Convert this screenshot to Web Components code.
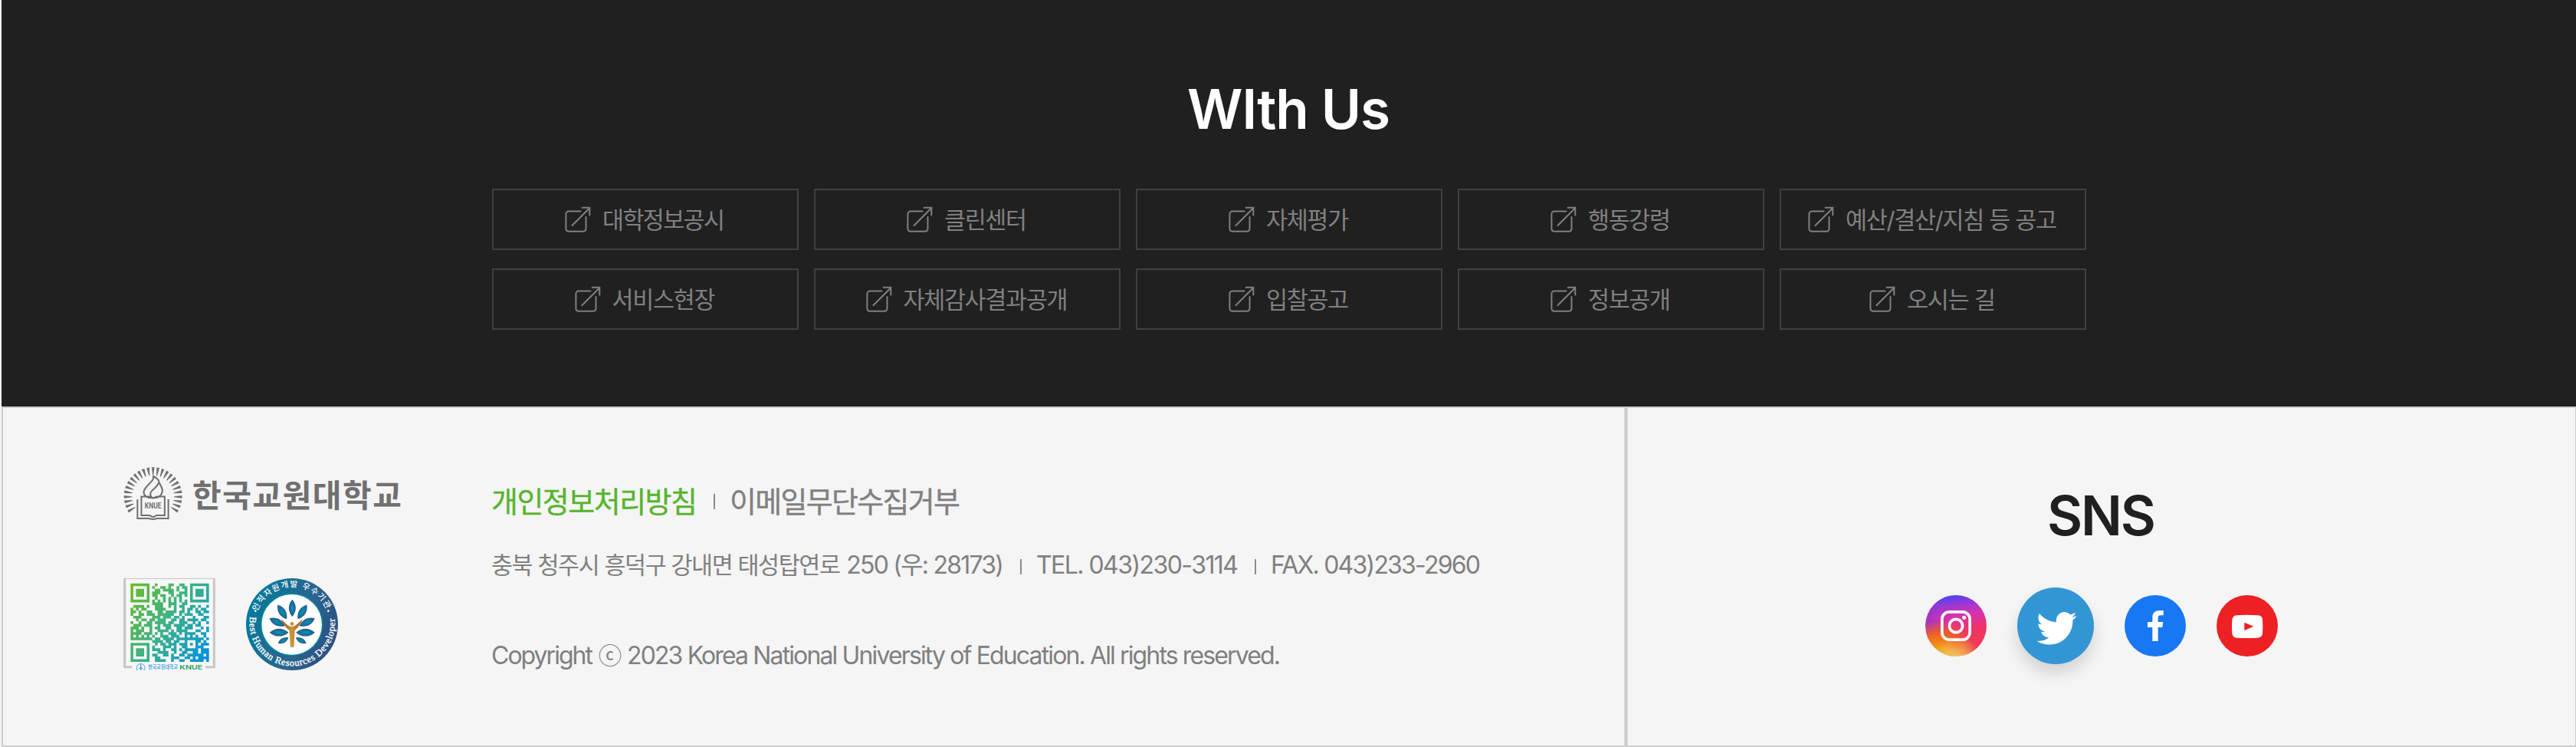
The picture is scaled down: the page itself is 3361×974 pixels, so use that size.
<!DOCTYPE html>
<html lang="ko">
<head>
<meta charset="utf-8">
<title>한국교원대학교</title>
<style>
html,body{margin:0;padding:0}
body{background:#f5f5f5;font-family:Inter,"Noto Sans CJK KR",sans-serif;overflow:hidden;height:974px}
</style>
</head>
<body>
<site-bottom></site-bottom>
<script>
const define = (name, html, init) => {
  const tpl = document.createElement('template');
  tpl.innerHTML = html;
  customElements.define(name, class extends HTMLElement {
    constructor(){ super(); this.attachShadow({mode:'open'}); }
    connectedCallback(){
      if (this.shadowRoot.firstChild) return;
      this.shadowRoot.append(tpl.content.cloneNode(true));
      if (init) init(this, this.shadowRoot);
    }
  });
};

/* Text tracked out or in so that its line takes exactly the width in "w". */
define('fit-text', `<style>:host{display:inline-block;white-space:pre;flex:none}span{display:inline-block}</style><span><slot></slot></span>`,
  (el, root) => {
    const w = +el.getAttribute('w');
    el.style.width = w + 'px';
    const n = [...el.textContent].length - 1;
    const now = root.querySelector('span').getBoundingClientRect().width;
    if (n > 0) el.style.letterSpacing = ((w - now) / n) + 'px';
  });

define('link-button', `<style>
:host{display:flex;align-items:center;justify-content:center;gap:15px;box-sizing:border-box;width:400px;height:80px;border:2px solid #404040;color:#808080;font-size:30.5px;line-height:40px}
svg{width:34px;height:34px;flex:none;display:block}
::slotted(fit-text){margin-top:2px}
</style>
<svg viewBox="0 0 34 34" fill="none" stroke="#808080" stroke-width="2" stroke-linecap="round"><path d="M20.5 6.6H4.8A3.4 3.4 0 0 0 1.4 10v19.300a3.400 3.400 0 0 0 3.400 3.400H24.100a3.400 3.400 0 0 0 3.400-3.400V14"/><path d="M9.500 25 32 2.500M22.700 1.700h9.600v9.800"/></svg><slot></slot>`);

define('with-us', `<style>
:host{display:flex;flex-direction:column;align-items:center;height:530px;background:#202020}
h2{margin:102px 0 64px;height:80px;line-height:80px;font-size:71px;font-weight:600;color:#fff}
nav{display:grid;grid-template-columns:repeat(5,400px);gap:24px 20px}
</style>
<h2><fit-text w="265">WIth Us</fit-text></h2>
<nav>
<link-button><fit-text w="160">대학정보공시</fit-text></link-button>
<link-button><fit-text w="108">클린센터</fit-text></link-button>
<link-button><fit-text w="108">자체평가</fit-text></link-button>
<link-button><fit-text w="108">행동강령</fit-text></link-button>
<link-button><fit-text w="276">예산/결산/지침 등 공고</fit-text></link-button>
<link-button><fit-text w="135">서비스현장</fit-text></link-button>
<link-button><fit-text w="215">자체감사결과공개</fit-text></link-button>
<link-button><fit-text w="108">입찰공고</fit-text></link-button>
<link-button><fit-text w="108">정보공개</fit-text></link-button>
<link-button><fit-text w="116">오시는 길</fit-text></link-button>
</nav>`);

define('knue-logo', `<style>
:host{display:flex;align-items:flex-start;gap:12px;height:70px;color:#707070}
svg{width:78px;height:69px;display:block}
fit-text{font:700 41px/48px "Noto Sans CJK KR",sans-serif;margin-top:10px}
</style>
<svg viewBox="0 0 228 204">
<g class="rays" fill="#707070"></g>
<g fill="none" stroke="#707070" stroke-width="6" stroke-linejoin="round">
<path d="M113 34c5 14-5 20-15 31-13 14-22 22-21 33 1 10 9 17 20 20h31c13-5 21-14 21-28 0-12-8-21-13-31-7 20-26 26-32 39-3 8 0 15 6 20M113 34c14 8 26 17 23 27"/>
<path d="M68 114v72h32c4 0 5 6 13 6s9-6 13-6h32v-72h-31c-5 0-6 6-14 6s-9-6-14-6zM53 124v74h44c3 0 5 3 16 3s13-3 16-3h43v-74" stroke-linejoin="miter"/>
</g>
<text x="113" y="160" text-anchor="middle" font-family="Roboto,sans-serif" font-weight="700" font-size="30" textLength="64" lengthAdjust="spacingAndGlyphs" fill="#707070">KNUE</text>
</svg><fit-text w="273">한국교원대학교</fit-text>`,
  (el, root) => {
    let s = '';
    for (let i = -12; i <= 12; i++) s += `<path transform="translate(113 113) rotate(${i * 10.1})" d="M-5.500 -112h11L1.500 -81h-3z"/>`;
    root.querySelector('.rays').innerHTML = s;
  });

define('qr-mark', `<style>:host{display:block;width:120px;height:120px}svg{display:block;width:120px;height:120px}</style>
<svg viewBox="0 0 360 360">
<defs><linearGradient id="g" gradientUnits="userSpaceOnUse" x1="10" y1="70" x2="340" y2="300"><stop offset="0" stop-color="#66bb30"/><stop offset=".45" stop-color="#3eb382"/><stop offset=".72" stop-color="#22a4b0"/><stop offset="1" stop-color="#0090e4"/></linearGradient></defs>
<path d="M2 0h356v350H2z" fill="#f7f7f7"/>
<path d="M5 0v347h28M355 0v347h-34" fill="none" stroke="#c6c6c6" stroke-width="9"/><path d="M0 1h360" stroke="#c6c6c6" stroke-width="4"/>
<path class="m" fill="url(#g)"/>
<circle cx="68" cy="350" r="16" fill="none" stroke="#77b8e8" stroke-width="4"/><path d="M68 336v24M60 352h16" stroke="#4c9edb" stroke-width="4"/>
<text x="97" y="355" font-family="Noto Sans CJK KR,sans-serif" font-weight="700" font-size="20" fill="#5aa9de" textLength="116" lengthAdjust="spacingAndGlyphs">한국교원대학교</text>
<text x="220" y="357" font-family="Inter,sans-serif" font-weight="700" font-size="22" fill="#35a768" textLength="90" lengthAdjust="spacingAndGlyphs">KNUE</text>
</svg>`,
  (el, root) => {
    const rows = [
      '1111111..1....11..11..1111111',
      '1.....1.1..11.1..1.11.1.....1',
      '1.111.1..11.1111.1..1.1.111.1',
      '1.111.1.111...11..111.1.111.1',
      '1.111.1.11.11..1.11.1.1.111.1',
      '1.....1..1..1.1.1.1...1.....1',
      '1111111.1.1.1.1.1.1.1.1111111',
      '........1111..111..11........',
      '.1111.1..111..1.1.11..11.1..1',
      '1.1.11...1111...1..1.11.1.11.',
      '11.1..11..11.1111.11.1..11.11',
      '1..11.111.111111..1.111..11..',
      '.111....111.111.11.1...1...11',
      '..1.11.11.111..11.11.1111.11.',
      '1..1..11.1111.11..111..1.1..1',
      '.111.111..1.111.1111.11.11...',
      '111.1..1.11..11..11.111...1.1',
      '1.111..1..1111.1.1111...11..1',
      '1111.111.1.1..111.1.1111..11.',
      '1.1.1.1.1..111.111..1.1.1..1.',
      '11111111.11.1111.1111111111.1',
      '........1111.11.11..1...11.1.',
      '1111111..1.11.111.111.1.1.111',
      '1.....1.1...111.1..11...111..',
      '1.111.1.111.1..11.1.11111.111',
      '1.111.1...1111..1..11..11.111',
      '1.111.1.11..11.1..11.111111.1',
      '1.....1..11....111..11.1.1111',
      '1111111..1111..1..11..11111.1'];
    let d = '';
    rows.forEach((r, y) => [...r].forEach((c, x) => { if (c === '1') d += `M${(28 + x * 10.58).toFixed(1)} ${(20 + y * 10.58).toFixed(1)}h10.800v10.800h-10.800z`; }));
    root.querySelector('.m').setAttribute('d', d);
  });

define('hrd-badge', `<style>:host{display:block;width:120px;height:120px}svg{display:block;width:120px;height:120px}</style>
<svg viewBox="0 0 360 360">
<defs>
<linearGradient id="r" x1="0" y1=".3" x2="1" y2=".7"><stop offset="0" stop-color="#007c9c"/><stop offset=".6" stop-color="#2c648f"/><stop offset="1" stop-color="#2b4f82"/></linearGradient>
<radialGradient id="l"><stop offset="0" stop-color="#009ab0"/><stop offset=".5" stop-color="#18779f"/><stop offset="1" stop-color="#2a5288"/></radialGradient>
<linearGradient id="b" x1="0" x2="1"><stop offset="0" stop-color="#8a5a22"/><stop offset=".5" stop-color="#cf9438"/><stop offset="1" stop-color="#8a5a22"/></linearGradient>
<path id="top" d="M42 138A145 145 0 0 1 322 146"/>
<path id="bot" d="M18 140A167 167 0 1 0 344 140"/>
<path id="leaf" d="M0-34C18-14 18 12 0 33C-18 12-18-14 0-34z"/>
</defs>
<circle cx="180" cy="180" r="180" fill="url(#r)"/>
<circle cx="179" cy="181" r="120" fill="#fff" stroke="#008aa4" stroke-width="4"/>
<g fill="#fff" font-family="Noto Sans CJK KR,sans-serif">
<text font-size="32" font-weight="500"><textPath href="#top" startOffset="8" textLength="345">인적자원개발 우수기관</textPath></text>
<text font-size="37" font-family="Liberation Serif,serif" stroke="#fff" stroke-width="1"><textPath href="#bot" startOffset="10" textLength="570" lengthAdjust="spacing">Best Human Resources Developer</textPath></text>
<circle cx="37" cy="128" r="4"/><circle cx="322" cy="128" r="4"/>
</g>
<g fill="url(#l)">
<use href="#leaf" transform="translate(181 117)"/>
<use href="#leaf" transform="translate(142 132) rotate(-32)"/><use href="#leaf" transform="translate(220 132) rotate(32)"/>
<use href="#leaf" transform="translate(122 172) rotate(-64)"/><use href="#leaf" transform="translate(239 172) rotate(64)"/>
<use href="#leaf" transform="translate(130 212) rotate(-90) scale(1.100)"/><use href="#leaf" transform="translate(232 212) rotate(90) scale(1.100)"/>
<use href="#leaf" transform="translate(146 243) rotate(-118) scale(.7)"/><use href="#leaf" transform="translate(215 243) rotate(118) scale(.7)"/>
</g>
<path d="M138 158c10 13 24 27 36 30h10c12-3 27-17 37-30-5 20-18 34-30 46l-4 65h-13l-4-65c-14-12-27-26-32-46z" fill="url(#b)"/>
<circle cx="180" cy="178" r="7" fill="#c48a34"/>
</svg>`);

define('bar-sep', `<style>:host{display:block;width:2px;height:20px;background:#8c8c8c;flex:none}</style>`);

define('footer-info', `<style>
:host{display:block;color:#808080}
.row{display:flex;align-items:center;height:40px;line-height:40px;font-size:32px;width:max-content}
.links{margin-top:102px;font-size:38px;-webkit-text-stroke:.35px currentColor}
.links b{font-weight:400;color:#56b52d}
.addr{margin-top:43px}
.copy{margin-top:78px}
.k{font-size:30.500px}
.c{font-size:30.500px}
.links bar-sep{margin:0 19px 1px 21px}
.addr bar-sep{margin:3px 19px 0 21px}
</style>
<div class="row links"><b><fit-text w="269">개인정보처리방침</fit-text></b><bar-sep></bar-sep><fit-text w="301">이메일무단수집거부</fit-text></div>
<div class="row addr"><fit-text class="k" w="456">충북 청주시 흥덕구 강내면 태성탑연로</fit-text><fit-text w="213"> 250 (우: 28173)</fit-text><bar-sep></bar-sep><fit-text w="264">TEL. 043)230-3114</fit-text><bar-sep></bar-sep><fit-text w="274">FAX. 043)233-2960</fit-text></div>
<div class="row copy"><fit-text w="133">Copyright</fit-text><fit-text class="c" w="44"> ⓒ </fit-text><fit-text w="853">2023 Korea National University of Education. All rights reserved.</fit-text></div>`);

define('sns-icon', `<style>
:host{display:flex;align-items:center;justify-content:center;width:80px;height:80px;border-radius:50%;flex:none}
:host([kind=instagram]){background:radial-gradient(circle at 52% 108%,#f0d078 0,#f0cc7000 34%),radial-gradient(circle at 22% 104%,#f0a51c 0 12%,#f2641e 30%,#f2403000 48%),linear-gradient(70deg,#8a38cc 0,#a035b400 45%),linear-gradient(172deg,#3448f2 3%,#8a38dc 16%,#d432b4 34%,#f03364 58%,#f2404e 100%)}
:host([kind=twitter]){width:100px;height:100px;background:#3296d4;box-shadow:0 12px 20px rgba(0,0,0,.14)}
:host([kind=facebook]){background:#1877f2}
:host([kind=youtube]){background:#ed2024}
svg{display:none;width:100%;height:100%}
:host([kind=instagram]) .i,:host([kind=twitter]) .t,:host([kind=facebook]) .f,:host([kind=youtube]) .y{display:block}
</style>
<svg class="i" viewBox="0 0 240 240" fill="none" stroke="#fff" stroke-width="11"><rect x="65.500" y="65.500" width="109" height="109" rx="29"/><circle cx="120" cy="120" r="26"/><circle cx="152" cy="88" r="7.500" fill="#fff" stroke="none"/></svg>
<svg class="t" viewBox="0 0 300 300" fill="#fff"><path transform="translate(76 81.300) scale(6.550)" d="M23.953 4.570a10 10 0 0 1-2.825.775 4.958 4.958 0 0 0 2.163-2.723c-.951.555-2.005.959-3.127 1.184a4.920 4.920 0 0 0-8.384 4.482C7.690 8.095 4.067 6.130 1.640 3.162a4.822 4.822 0 0 0-.666 2.475c0 1.710.870 3.213 2.188 4.096a4.904 4.904 0 0 1-2.228-.616v.060a4.923 4.923 0 0 0 3.946 4.827 4.996 4.996 0 0 1-2.212.085 4.936 4.936 0 0 0 4.604 3.417 9.867 9.867 0 0 1-6.102 2.105c-.390 0-.779-.023-1.170-.067a13.995 13.995 0 0 0 7.557 2.209c9.053 0 13.998-7.496 13.998-13.985 0-.210 0-.420-.015-.630a9.935 9.935 0 0 0 2.460-2.548z"/></svg>
<svg class="f" viewBox="0 0 240 240" fill="#fff"><path d="M109 180v-54H90v-21h19V88c0-19 11-28 28-28h15v19h-11c-7 0-10 3-10 10v16h20l-3 21h-17v54z"/></svg>
<svg class="y" viewBox="0 0 240 240"><path d="M78 79q42-3 84 0 17 1 18 17 2 26 0 54-1 15-18 17-42 2-84 0-15-1-17-17-2-27 0-54 2-15 17-17z" fill="#fff"/><path d="M109 107l36 15.500-36 15.500z" fill="#ed2024"/></svg>`);

define('sns-panel', `<style>
:host{display:flex;flex-direction:column;align-items:center}
h2{margin:100px 0 54px;height:80px;line-height:80px;font-size:71px;font-weight:600;color:#202020}
div{display:flex;align-items:center;gap:40px}
</style><h2><fit-text w="142">SNS</fit-text></h2>
<div><sns-icon kind="instagram"></sns-icon><sns-icon kind="twitter"></sns-icon><sns-icon kind="facebook"></sns-icon><sns-icon kind="youtube"></sns-icon></div>`);

define('site-bottom', `<style>
:host{display:block;height:974px;padding-left:2px;box-sizing:border-box}
footer{display:grid;grid-template-columns:157px 480px 1478px 5px 1fr;box-sizing:border-box;height:444px;border:2px solid #ccc;border-right-width:1px;background:#f5f5f5}
.brand{grid-column:2}
.marks{display:flex;gap:40px;margin-top:75px}
knue-logo{margin-top:77px}
.div{background:linear-gradient(90deg,#dedede 1px,#ccc 1px 4px,#dedede 4px)}
</style>
<with-us></with-us>
<footer>
<div class="brand"><knue-logo></knue-logo><div class="marks"><qr-mark></qr-mark><hrd-badge></hrd-badge></div></div>
<footer-info></footer-info>
<div class="div"></div>
<sns-panel></sns-panel>
</footer>`);
</script>
</body>
</html>
